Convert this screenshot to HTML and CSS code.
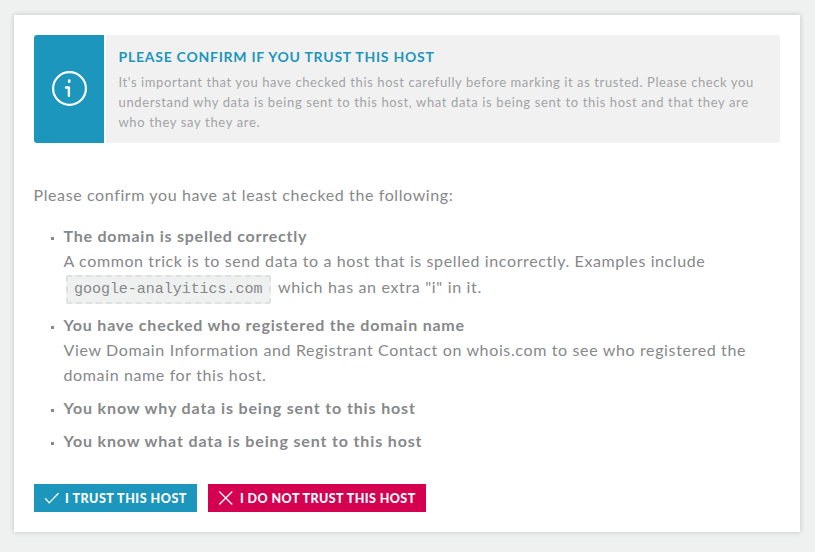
FILE: index.html
```html
<!DOCTYPE html>
<html lang="en">
<head>
<meta charset="utf-8">
<title>Trust this host</title>
<link rel="stylesheet" href="styles.css">
</head>
<body>
<div class="card">
  <div class="alert">
    <div class="alert-icon">
      <svg width="36" height="36" viewBox="0 0 36 36" fill="none" stroke="#fff">
        <circle cx="18.5" cy="17.5" r="16.4" stroke-width="2.2"/>
        <path d="M15 16.5h2.9v8.3" stroke-width="2.4" stroke-linecap="round" stroke-linejoin="round"/>
        <path d="M18.2 9.6v1.2" stroke-width="2.6" stroke-linecap="round"/>
      </svg>
    </div>
    <div class="alert-body">
      <h4>PLEASE CONFIRM IF YOU TRUST THIS HOST</h4>
      <p><span class="a1">It's important that you have checked this host carefully before marking it as trusted. Please check you</span><br>
      <span class="a2">understand why data is being sent to this host, what data is being sent to this host and that they are</span><br>
      <span class="a3">who they say they are.</span></p>
    </div>
  </div>
  <p class="intro">Please confirm you have at least checked the following:</p>
  <ul class="checks">
    <li><strong class="c1">The domain is spelled correctly</strong><br>
      <span class="c2">A common trick is to send data to a host that is spelled incorrectly. Examples include</span><br>
      <code>google-analyitics.com</code><span class="c3">which has an extra "i" in it.</span></li>
    <li><strong class="c4">You have checked who registered the domain name</strong><br>
      <span class="c5">View Domain Information and Registrant Contact on whois.com to see who registered the</span><br>
      <span class="c6">domain name for this host.</span></li>
    <li><strong class="c7">You know why data is being sent to this host</strong></li>
    <li><strong class="c8">You know what data is being sent to this host</strong></li>
  </ul>
  <div class="buttons">
    <a class="btn btn-trust"><svg width="15" height="14" viewBox="0 0 15 14"><path d="M1.2 7.3l4 4.6L14.5 2.2"/></svg><span>I TRUST THIS HOST</span></a>
    <a class="btn btn-deny"><svg width="15" height="14" viewBox="0 0 15 14"><path d="M1.3 .5l13 13M14.3 .5l-13 13"/></svg><span>I DO NOT TRUST THIS HOST</span></a>
  </div>
</div>
</body>
</html>
```

FILE: styles.css
```css
* { box-sizing: border-box; }
body {
  margin: 0;
  padding: 15px 15px 20px 14px;
  background: #eff1f1;
  color: #86888a;
  font: 16px/25px Lato, "Open Sans", sans-serif;
}
.card {
  height: 517px;
  padding: 20px;
  background: #fff;
  box-shadow: 0 0 5px rgba(0, 0, 0, 0.2);
}

.alert {
  display: flex;
  gap: 2px;
  height: 108px;
  border-radius: 3px;
  overflow: hidden;
}
.alert-icon {
  display: flex;
  align-items: center;
  justify-content: center;
  width: 70px;
  background: #1c96bc;
}
.alert-body {
  flex: 1;
  padding: 12px 0 0 12.5px;
  background: #f1f1f1;
  color: #a3a4a6;
  font-size: 13px;
  line-height: 20px;
  white-space: nowrap;
}
.alert-body h4 {
  margin: 0 0 5px;
  color: #1c96bc;
  font-size: 14px;
  font-weight: bold;
  letter-spacing: 0.75px;
}
.alert-body p { margin: 0; }
.a1 { letter-spacing: 0.59px; }
.a2 { letter-spacing: 0.63px; }
.a3 { letter-spacing: 0.65px; }

.intro {
  margin: 39px 0 16px -0.5px;
  letter-spacing: 0.61px;
}

.checks {
  margin: 0;
  padding: 0 0 0 29.5px;
  list-style: none;
  white-space: nowrap;
}
.checks li {
  position: relative;
  margin-bottom: 8px;
}
.checks li::before {
  content: "";
  position: absolute;
  left: -12.5px;
  top: 14px;
  width: 3px;
  height: 3px;
  background: #86888a;
}
.c1 { letter-spacing: 0.77px; }
.c2 { letter-spacing: 0.61px; }
.c3 { letter-spacing: 0.66px; }
.c4 { letter-spacing: 0.79px; }
.c5 { letter-spacing: 0.64px; }
.c6 { letter-spacing: 0.63px; }
.c7 { letter-spacing: 0.86px; }
.c8 { letter-spacing: 0.85px; }
code {
  display: inline-block;
  width: 205px;
  height: 29px;
  margin: 2px 7px 0 2.5px;
  padding: 0 0 0 6px;
  border: 2px dashed #dfe0e0;
  border-radius: 2px;
  background: #eff1f1;
  font: 15px/25px "Liberation Mono", monospace;
  letter-spacing: -0.03px;
}

.buttons {
  display: flex;
  gap: 11px;
  margin-top: 31px;
}
.btn {
  display: flex;
  align-items: center;
  gap: 6px;
  height: 28px;
  padding-left: 10px;
  color: #fff;
  font-size: 12.5px;
  font-weight: 900;
  white-space: nowrap;
}
.btn svg { fill: none; stroke: #fff; stroke-width: 1.3; }
.btn-trust {
  width: 163px;
  background: #1c96bc;
  letter-spacing: 0.52px;
}
.btn-deny {
  gap: 7px;
  width: 218px;
  background: #d60051;
  letter-spacing: 0.43px;
}
```
